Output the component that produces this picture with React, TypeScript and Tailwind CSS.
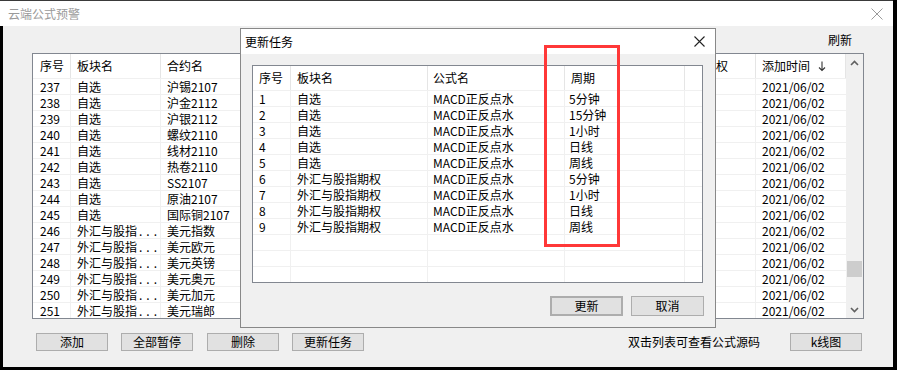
import React from "react";

const mainCols = [
  { key: "no", title: "序号", w: "w-[38px]", pad: "pl-[7px]" },
  { key: "block", title: "板块名", w: "w-[90px]", pad: "pl-[6px]" },
  { key: "contract", title: "合约名", w: "w-[120px]", pad: "pl-[6px]" },
  { key: "formula", title: "", w: "w-[150px]", pad: "pl-[6px]" },
  { key: "period", title: "", w: "w-[100px]", pad: "pl-[6px]" },
  { key: "price", title: "", w: "w-[143px]", pad: "pl-[6px]" },
  { key: "opt", title: "权", w: "w-[82px]", pad: "pl-[42px]" },
  { key: "time", title: "添加时间", w: "w-[90px]", pad: "pl-[6px]" },
];

const mainRows = [
  ["237", "自选", "沪锡2107"],
  ["238", "自选", "沪金2112"],
  ["239", "自选", "沪银2112"],
  ["240", "自选", "螺纹2110"],
  ["241", "自选", "线材2110"],
  ["242", "自选", "热卷2110"],
  ["243", "自选", "SS2107"],
  ["244", "自选", "原油2107"],
  ["245", "自选", "国际铜2107"],
  ["246", "外汇", "美元指数"],
  ["247", "外汇", "美元欧元"],
  ["248", "外汇", "美元英镑"],
  ["249", "外汇", "美元奥元"],
  ["250", "外汇", "美元加元"],
  ["251", "外汇", "美元瑞郎"],
];

const taskRows = [
  ["1", "自选", "5分钟"],
  ["2", "自选", "15分钟"],
  ["3", "自选", "1小时"],
  ["4", "自选", "日线"],
  ["5", "自选", "周线"],
  ["6", "外汇与股指期权", "5分钟"],
  ["7", "外汇与股指期权", "1小时"],
  ["8", "外汇与股指期权", "日线"],
  ["9", "外汇与股指期权", "周线"],
  ["", "", ""],
  ["", "", ""],
  ["", "", ""],
];

function Btn({ label, className = "" }: { label: string; className?: string }) {
  return (
    <div
      className={`flex items-center justify-center bg-[#e1e1e1] border border-[#adadad] text-[12px] leading-none text-black ${className}`}
    >
      {label}
    </div>
  );
}

function Chevron({ up }: { up?: boolean }) {
  return (
    <svg width="9" height="6" viewBox="0 0 9 6">
      <path
        d={up ? "M1 5 L4.5 1.5 L8 5" : "M1 1 L4.5 4.5 L8 1"}
        stroke="#606060"
        strokeWidth="1.6"
        fill="none"
      />
    </svg>
  );
}

function MainList() {
  return (
    <div className="ml-[29px] mr-[29px] h-[266px] border border-[#828790] bg-white flex">
      <div className="flex flex-col w-[813px]">
        {/* header */}
        <div className="flex h-[24px]">
          {mainCols.map((c) => (
            <div
              key={c.key}
              className={`${c.w} ${c.pad} shrink-0 flex items-center text-[12px] border-r border-[#e5e5e5] whitespace-nowrap overflow-hidden`}
            >
              {c.title}
              {c.key === "time" && (
                <svg width="8" height="11" viewBox="0 0 8 11" className="ml-[8px]">
                  <path d="M4 0.5 V9.5 M1 6.5 L4 9.5 L7 6.5" stroke="#333" strokeWidth="1.1" fill="none" />
                </svg>
              )}
            </div>
          ))}
        </div>
        {mainRows.map((r) => (
          <div key={r[0]} className="flex h-[16px] border-t border-[#f0f0f0] text-[12px] leading-[15px]">
            <div className="w-[38px] pl-[7px] shrink-0 border-r border-[#f0f0f0]">{r[0]}</div>
            <div className="w-[90px] pl-[6px] shrink-0 border-r border-[#f0f0f0] whitespace-nowrap">
              {r[1] === "外汇" ? (
                <>
                  外汇与股指<span className="tracking-[4px] ml-[2px]">...</span>
                </>
              ) : (
                r[1]
              )}
            </div>
            <div className="w-[120px] pl-[6px] shrink-0 border-r border-[#f0f0f0]">{r[2]}</div>
            {/* columns hidden behind the dialog */}
            <div className="w-[150px] shrink-0 border-r border-[#f0f0f0]" />
            <div className="w-[100px] shrink-0 border-r border-[#f0f0f0]" />
            <div className="w-[143px] shrink-0 border-r border-[#f0f0f0]" />
            <div className="w-[82px] shrink-0 border-r border-[#f0f0f0]" />
            <div className="w-[90px] pl-[6px] shrink-0">2021/06/02</div>
          </div>
        ))}
      </div>
      {/* scrollbar */}
      <div className="w-[17px] bg-[#f0f0f0] flex flex-col items-center">
        <div className="h-[17px] flex items-center justify-center">
          <Chevron up />
        </div>
        <div className="flex-1 w-full flex flex-col">
          <div className="h-[190px]" />
          <div className="h-[16px] mx-[1px] bg-[#cdcdcd]" />
        </div>
        <div className="h-[17px] flex items-center justify-center">
          <Chevron />
        </div>
      </div>
    </div>
  );
}

function TaskDialog() {
  return (
    <div className="absolute left-[240px] top-[28px] w-[476px] h-[300px] border border-[#888] bg-[#f0f0f0] flex flex-col">
      <div className="h-[25px] bg-white flex items-center justify-between pl-[4px] pr-[10px]">
        <span className="text-[12px]">更新任务</span>
        <svg width="11" height="11" viewBox="0 0 11 11">
          <path d="M0.5 0.5 L10.5 10.5 M10.5 0.5 L0.5 10.5" stroke="#222" strokeWidth="1.1" />
        </svg>
      </div>
      <div className="ml-[11px] mt-[11px] w-[451px] h-[218px] border border-[#828790] bg-white flex flex-col">
        <div className="flex h-[24px] text-[12px]">
          <div className="w-[38px] pl-[6px] shrink-0 flex items-center border-r border-[#e5e5e5]">序号</div>
          <div className="w-[137px] pl-[6px] shrink-0 flex items-center border-r border-[#e5e5e5]">板块名</div>
          <div className="w-[137px] pl-[5px] shrink-0 flex items-center border-r border-[#e5e5e5]">公式名</div>
          <div className="w-[120px] pl-[6px] shrink-0 flex items-center border-r border-[#e5e5e5]">周期</div>
          <div className="flex-1" />
        </div>
        {taskRows.map((r, i) => (
          <div key={i} className="flex h-[16px] border-t border-[#f0f0f0] text-[12px] leading-[15px]">
            <div className="w-[38px] pl-[6px] shrink-0 border-r border-[#f0f0f0]">{r[0]}</div>
            <div className="w-[137px] pl-[6px] shrink-0 border-r border-[#f0f0f0]">{r[1]}</div>
            <div className="w-[137px] pl-[5px] shrink-0 border-r border-[#f0f0f0]">{r[0] ? "MACD正反点水" : ""}</div>
            <div className="w-[120px] pl-[4px] shrink-0 border-r border-[#f0f0f0]">{r[2]}</div>
            <div className="flex-1" />
          </div>
        ))}
      </div>
      <div className="mt-[13px] flex justify-end gap-[8px] pr-[11px]">
        <Btn label="更新" className="w-[73px] h-[20px] border-2 border-[#0078d7]" />
        <Btn label="取消" className="w-[73px] h-[20px]" />
      </div>
    </div>
  );
}

export default function App() {
  return (
    <div className="relative w-[897px] h-[370px] bg-black overflow-hidden text-black font-['Noto_Sans_CJK_SC','Microsoft_YaHei',sans-serif]">
      <div className="w-[893px] h-[367px] flex flex-col">
        {/* title bar */}
        <div className="h-[26px] bg-white border-t border-[#3a3a3a] flex items-center justify-between pl-[8px] pr-[10px]">
          <span className="text-[12px] text-[#9a9a9a]">云端公式预警</span>
          <svg width="12" height="12" viewBox="0 0 12 12">
            <path d="M0.5 0.5 L11.5 11.5 M11.5 0.5 L0.5 11.5" stroke="#9a9a9a" strokeWidth="1" />
          </svg>
        </div>
        {/* body */}
        <div className="flex-1 ml-[3px] bg-[#f0f0f0] flex flex-col">
          <div className="h-[27px] flex items-center justify-end pr-[41px] text-[12px]">刷新</div>
          <MainList />
          <div className="mt-[14px] flex items-center h-[18px] pl-[33px]">
            <Btn label="添加" className="w-[72px] h-[18px]" />
            <Btn label="全部暂停" className="w-[72px] h-[18px] ml-[13px]" />
            <Btn label="删除" className="w-[72px] h-[18px] ml-[14px]" />
            <Btn label="更新任务" className="w-[72px] h-[18px] ml-[13px]" />
            <span className="ml-[264px] text-[12px]">双击列表可查看公式源码</span>
            <Btn label="k线图" className="w-[72px] h-[18px] ml-[30px]" />
          </div>
        </div>
      </div>
      <TaskDialog />
      {/* red annotation box */}
      <div className="absolute left-[544px] top-[45px] w-[76px] h-[202px] border-[3px] border-[#ff3838]" />
    </div>
  );
}
